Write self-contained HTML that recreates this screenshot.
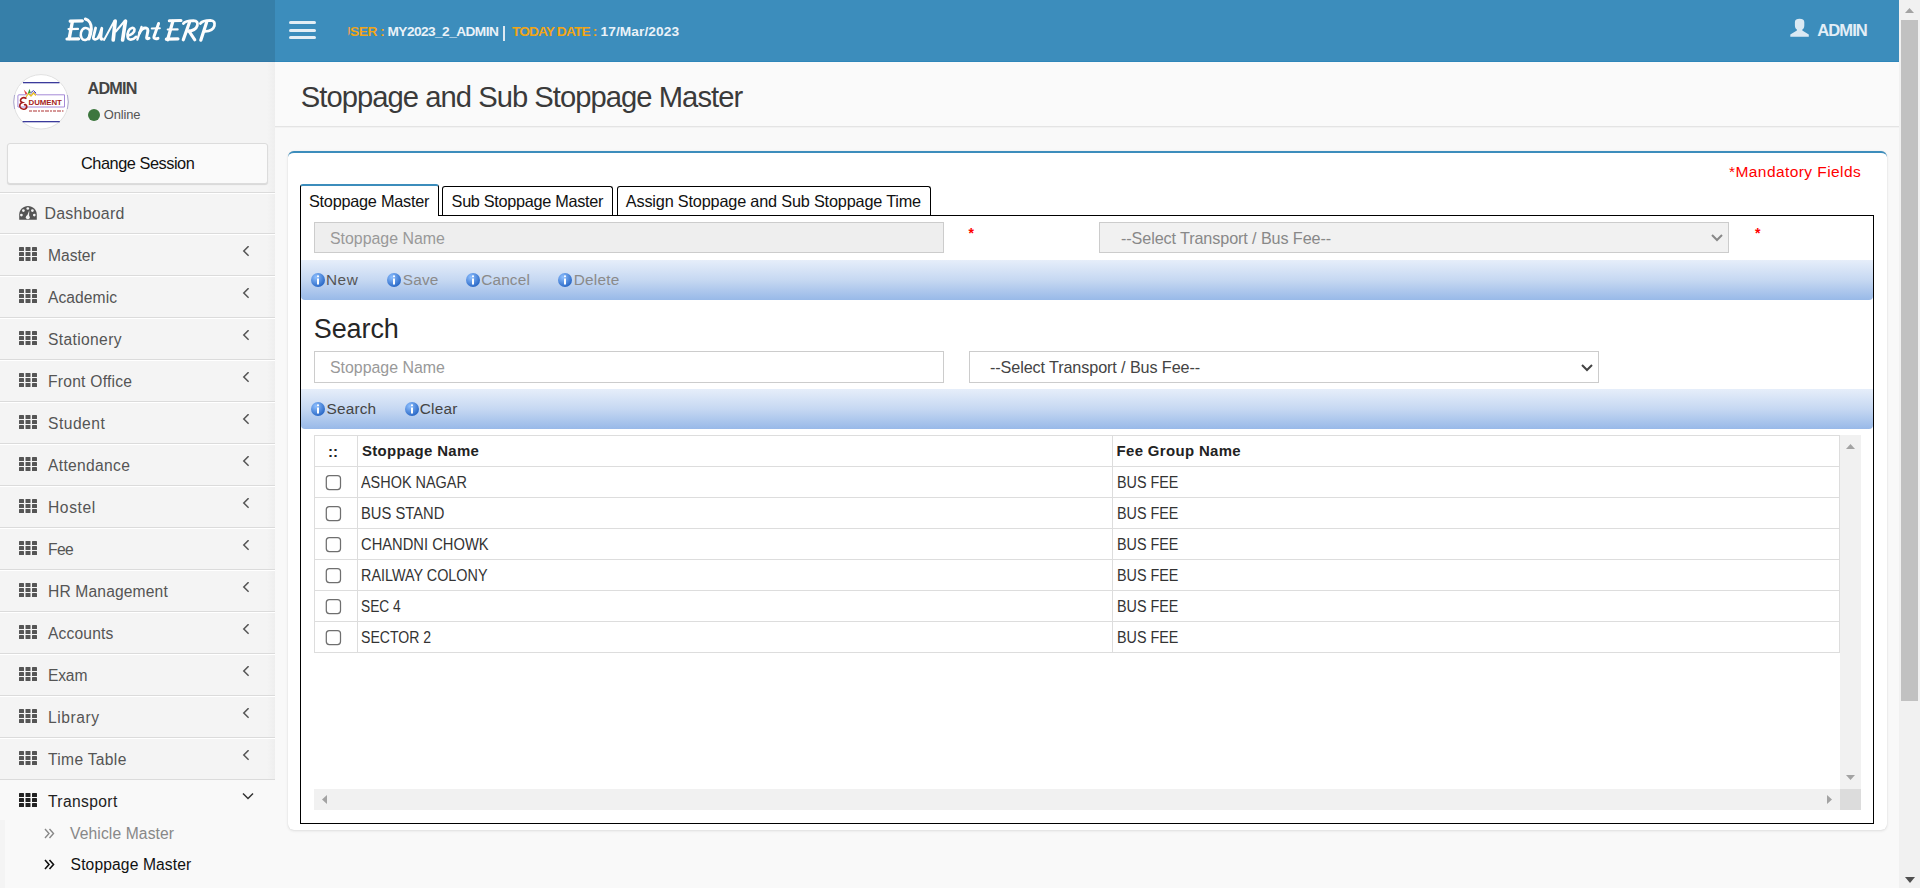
<!DOCTYPE html>
<html><head><meta charset="utf-8"><style>
html,body{margin:0;padding:0;width:1920px;height:888px;overflow:hidden;font-family:"Liberation Sans", sans-serif;}
div{font-family:"Liberation Sans", sans-serif;}
</style></head><body>
<div style="position:absolute;left:0px;top:0px;width:1920px;height:888px;background:#f9f9f9"></div>
<div style="position:absolute;left:0px;top:0px;width:275px;height:62px;background:#367fa9"></div>
<div style="position:absolute;left:275px;top:0px;width:1624px;height:62px;background:#3c8dbc"></div>
<div style="position:absolute;left:0px;top:61px;width:275px;height:1px;background:#2f78a8"></div>
<div style="position:absolute;left:275px;top:61px;width:1624px;height:1px;background:#2e86ba"></div>
<svg style="position:absolute;left:0;top:0" width="275" height="62" viewBox="0 0 275 62"><g stroke="#fdfdfd" fill="none" stroke-linecap="round" stroke-linejoin="round">
<path d="M70.2 21.2 L82.3 20.9" stroke-width="3.22"/><path d="M72.3 22 L69.2 38.6" stroke-width="3.36"/><path d="M68.6 29.1 L78 28.9" stroke-width="2.24"/><path d="M67 39.0 L78.6 38.8" stroke-width="3.22"/>
<path d="M89.5 30 C87.5 27 82.5 26.8 81 32.5 C79.8 37.5 82.5 40.5 85.5 40 C88.5 39.5 90.5 35 89.8 30" stroke-width="2.52"/><path d="M85.4 19 C89 20 91.5 24 91.3 29 C91 33 90 36.5 89 39" stroke-width="3.08"/>
<path d="M95.6 28 L93.4 37 C93 39.5 95.5 40 97.5 38.5 C99.5 36.5 101 31 101.8 28.3 L100.8 37.5 C100.6 39.2 101.2 39.6 102.5 39" stroke-width="2.80"/>
<path d="M104 40 L114.3 21" stroke-width="1.96"/><path d="M115.2 21 L113.2 40" stroke-width="3.64"/><path d="M115.8 31.5 L124.6 21" stroke-width="1.96"/><path d="M125.5 21 L122.6 40" stroke-width="3.64"/>
<path d="M127.8 35.8 C131 35 135 32.5 134.5 29.5 C134 27 130 27.5 128.5 31 C127 34.5 127 39 130 39.5 C132 39.8 134.5 38.5 136 36.8" stroke-width="2.66"/>
<path d="M137.4 39.5 L141.5 27" stroke-width="2.38"/><path d="M139.5 33 C141.5 29 144 27.5 146.5 28.2 C148.5 28.8 148 31 147.3 34 L146.6 37.5 C146.5 38.8 147.5 39 149 38.2" stroke-width="2.94"/>
<path d="M158.6 23.5 L154 36.5 C153.5 38.5 155.5 39.3 158 38.3" stroke-width="2.94"/><path d="M151.8 28.5 L159.8 28.3" stroke-width="2.10"/>
<path d="M169.3 20.7 L181 20.5" stroke-width="3.08"/><path d="M172.8 21.5 L167.6 39.8" stroke-width="3.22"/><path d="M167.8 29.5 L177.6 29.4" stroke-width="2.24"/><path d="M166.3 39.1 L178 38.9" stroke-width="3.08"/>
<path d="M189.6 22 L183.3 39.8" stroke-width="3.22"/><path d="M183.4 23.5 C185 21 189 20.6 193.5 20.6 C197 20.7 198 23 197.3 25.5 C196.3 29 192 31 187.5 31.2" stroke-width="2.80"/><path d="M189 31.2 L194.8 39.8" stroke-width="3.08"/>
<path d="M206.7 22 L200.8 40.2" stroke-width="3.22"/><path d="M200.4 23.5 C202 21 206 20.4 210.5 20.4 C214 20.5 215.2 23 214.4 25.8 C213.3 29.5 209 31.2 205 31.3" stroke-width="2.80"/>
</g></svg>
<div style="position:absolute;left:289px;top:21px;width:27px;height:3px;background:#e4eef5;border-radius:2px"></div>
<div style="position:absolute;left:289px;top:28.5px;width:27px;height:3px;background:#e4eef5;border-radius:2px"></div>
<div style="position:absolute;left:289px;top:36px;width:27px;height:3px;background:#e4eef5;border-radius:2px"></div>
<div style="position:absolute;left:348px;top:20px;width:400px;height:24px;overflow:hidden">
</div>
<div style="position:absolute;left:340.50px;top:25.30px;font-size:13.70px;line-height:13.70px;color:#f2a516;font-weight:bold;letter-spacing:-0.4px;white-space:nowrap;clip-path:inset(0 0 0 8px);">USER :</div>
<div style="position:absolute;left:387.50px;top:25.30px;font-size:13.70px;line-height:13.70px;color:#eaf2f8;font-weight:bold;letter-spacing:-0.57px;white-space:nowrap;">MY2023_2_ADMIN</div>
<div style="position:absolute;left:503px;top:25.6px;width:1.6px;height:15px;background:#dde9f2"></div>
<div style="position:absolute;left:512.00px;top:25.30px;font-size:13.70px;line-height:13.70px;color:#f2a516;font-weight:bold;letter-spacing:-0.85px;white-space:nowrap;">TODAY DATE :</div>
<div style="position:absolute;left:600.50px;top:25.30px;font-size:13.70px;line-height:13.70px;color:#eaf2f8;font-weight:bold;letter-spacing:0.1px;white-space:nowrap;">17/Mar/2023</div>
<svg style="position:absolute;left:1790px;top:18px" width="20" height="20" viewBox="0 0 20 20"><path d="M4.9 3.9 C4.9 1.6 6.8 0.8 9.6 0.8 C12.4 0.8 14.3 1.6 14.3 3.9 L14.3 7.4 C14.3 9.6 13.3 10.9 12.3 11.6 L12.3 12.4 L18.8 16.6 L18.8 18.8 L0.3 18.8 L0.3 16.6 L6.9 12.4 L6.9 11.6 C5.9 10.9 4.9 9.6 4.9 7.4 Z" fill="#dbe9f3"/></svg>
<div style="position:absolute;left:1817.20px;top:22.85px;font-size:16.60px;line-height:16.60px;color:#e3eef6;font-weight:bold;letter-spacing:-0.95px;white-space:nowrap;">ADMIN</div>
<div style="position:absolute;left:0px;top:62px;width:275px;height:826px;background:#f4f4f4"></div>
<div style="position:absolute;left:267px;top:62px;width:8px;height:826px;background:linear-gradient(to right,#f4f4f4,#eeeeee)"></div>
<svg style="position:absolute;left:14px;top:74px;overflow:visible" width="55" height="56" viewBox="0 0 55 56">
<circle cx="27" cy="27.8" r="27.2" fill="#fff" stroke="#dadada" stroke-width="0.8"/>
<path d="M0.6 21 A27 27 0 0 0 0.6 35" stroke="#5a4fb0" stroke-width="0.8" fill="none" opacity="0.5"/>
<path d="M53.4 21 A27 27 0 0 1 53.4 35" stroke="#5a4fb0" stroke-width="0.8" fill="none" opacity="0.5"/>
<rect x="9" y="8" width="36.5" height="1.3" fill="#3b3b9b"/>
<rect x="8.6" y="47" width="37.2" height="1.3" fill="#3b3b9b"/>
<path d="M13 20.8 L4.9 20.8 Q3.9 20.8 3.9 22 L3.9 33 L50.5 33 L50.5 20.8 L23 20.8 L20 18 L16 21" stroke="#a58ad8" stroke-width="1" fill="none"/>
<path d="M12 23 L14.5 19.5 L17 22 L19.5 19 L22 21.5" stroke="#e8c020" stroke-width="1.2" fill="none"/>
<path d="M11.5 20.5 L9.8 15.5 L13.5 19.5 Z" fill="#e04040"/><path d="M13.8 19.5 L15.5 14.8 L16.8 19 Z" fill="#3a9a3a"/><path d="M16.5 19 L19.5 16.5 L22 19" stroke="#4a4ab0" stroke-width="1" fill="none"/>
<text x="14.6" y="31.2" font-family="Liberation Sans" font-weight="bold" font-size="7.9" fill="#a51c1c" letter-spacing="-0.1">DUMENT</text>
<path d="M12.5 24.5 Q9 22.5 7 25 Q5.5 27.5 8.5 28.5 Q5 29.5 6 33 Q7.5 36 11 35 Q13.5 34 12.5 31.5 Q11.5 30 10 31" stroke="#a51c1c" stroke-width="1.6" fill="none"/>
<path d="M15 37 L49.5 37" stroke="#b84a4a" stroke-width="1.3" stroke-dasharray="3 1 4 1 2 1" opacity="0.75"/>
</svg>
<div style="position:absolute;left:87.50px;top:80.29px;font-size:16.20px;line-height:16.20px;color:#444;font-weight:bold;letter-spacing:-0.79px;white-space:nowrap;">ADMIN</div>
<div style="position:absolute;left:87.5px;top:109px;width:12px;height:12px;border-radius:50%;background:#3c763d"></div>
<div style="position:absolute;left:103.75px;top:109.06px;font-size:12.92px;line-height:12.92px;color:#555;font-weight:normal;letter-spacing:-0.106px;white-space:nowrap;">Online</div>
<div style="position:absolute;left:7px;top:143px;width:259px;height:39px;background:#fafafa;border:1px solid #dcdcdc;border-radius:3px;box-shadow:0 1px 1px rgba(0,0,0,0.12)"></div>
<div style="position:absolute;left:81.00px;top:154.97px;font-size:16.34px;line-height:16.34px;color:#111;font-weight:normal;letter-spacing:-0.465px;white-space:nowrap;">Change Session</div>
<div style="position:absolute;left:0px;top:192px;width:275px;height:1px;background:#dbdbdb"></div>
<div style="position:absolute;left:0px;top:193px;width:275px;height:1px;background:#ffffff"></div>
<svg style="position:absolute;left:19px;top:206px" width="18" height="14" viewBox="0 0 18 14">
<path d="M0.2 13.7 L0.2 8.5 C0.2 3.8 4.2 0 9 0 C13.8 0 17.8 3.8 17.8 8.5 L17.8 13.7 Z" fill="#555"/>
<circle cx="8.8" cy="2.5" r="1.35" fill="#f4f4f4"/><circle cx="4.4" cy="4.6" r="1.35" fill="#f4f4f4"/><circle cx="13.4" cy="4.6" r="1.35" fill="#f4f4f4"/><circle cx="2.4" cy="9.1" r="1.35" fill="#f4f4f4"/><circle cx="15.3" cy="9.1" r="1.35" fill="#f4f4f4"/>
<path d="M10.3 4.3 L7.6 11 L10 11.4 Z" fill="#f4f4f4"/><circle cx="8.8" cy="11.2" r="2" fill="#f4f4f4"/>
</svg>
<div style="position:absolute;left:44.50px;top:205.62px;font-size:15.92px;line-height:15.92px;color:#555;font-weight:normal;letter-spacing:0.254px;white-space:nowrap;">Dashboard</div>
<div style="position:absolute;left:0px;top:233px;width:275px;height:1px;background:#dbdbdb"></div>
<div style="position:absolute;left:0px;top:234px;width:275px;height:1px;background:#ffffff"></div>
<svg style="position:absolute;left:19px;top:247px" width="18" height="14" viewBox="0 0 18 14"><rect x="0" y="0" width="5" height="4" rx="0.6" fill="#555"/><rect x="6.5" y="0" width="5" height="4" rx="0.6" fill="#555"/><rect x="13" y="0" width="5" height="4" rx="0.6" fill="#555"/><rect x="0" y="5" width="5" height="4" rx="0.6" fill="#555"/><rect x="6.5" y="5" width="5" height="4" rx="0.6" fill="#555"/><rect x="13" y="5" width="5" height="4" rx="0.6" fill="#555"/><rect x="0" y="10" width="5" height="4" rx="0.6" fill="#555"/><rect x="6.5" y="10" width="5" height="4" rx="0.6" fill="#555"/><rect x="13" y="10" width="5" height="4" rx="0.6" fill="#555"/></svg>
<div style="position:absolute;left:48.00px;top:247.56px;font-size:15.64px;line-height:15.64px;color:#555;font-weight:normal;letter-spacing:0.0px;white-space:nowrap;">Master</div>
<svg style="position:absolute;left:242px;top:246px" width="8" height="11" viewBox="0 0 8 11"><path d="M6.6 0.2 L1.8 5 L6.6 9.8" stroke="#555" stroke-width="1.5" fill="none"/></svg>
<div style="position:absolute;left:0px;top:275px;width:275px;height:1px;background:#dbdbdb"></div>
<div style="position:absolute;left:0px;top:276px;width:275px;height:1px;background:#ffffff"></div>
<svg style="position:absolute;left:19px;top:289px" width="18" height="14" viewBox="0 0 18 14"><rect x="0" y="0" width="5" height="4" rx="0.6" fill="#555"/><rect x="6.5" y="0" width="5" height="4" rx="0.6" fill="#555"/><rect x="13" y="0" width="5" height="4" rx="0.6" fill="#555"/><rect x="0" y="5" width="5" height="4" rx="0.6" fill="#555"/><rect x="6.5" y="5" width="5" height="4" rx="0.6" fill="#555"/><rect x="13" y="5" width="5" height="4" rx="0.6" fill="#555"/><rect x="0" y="10" width="5" height="4" rx="0.6" fill="#555"/><rect x="6.5" y="10" width="5" height="4" rx="0.6" fill="#555"/><rect x="13" y="10" width="5" height="4" rx="0.6" fill="#555"/></svg>
<div style="position:absolute;left:48.00px;top:289.56px;font-size:15.64px;line-height:15.64px;color:#555;font-weight:normal;letter-spacing:0.063px;white-space:nowrap;">Academic</div>
<svg style="position:absolute;left:242px;top:288px" width="8" height="11" viewBox="0 0 8 11"><path d="M6.6 0.2 L1.8 5 L6.6 9.8" stroke="#555" stroke-width="1.5" fill="none"/></svg>
<div style="position:absolute;left:0px;top:317px;width:275px;height:1px;background:#dbdbdb"></div>
<div style="position:absolute;left:0px;top:318px;width:275px;height:1px;background:#ffffff"></div>
<svg style="position:absolute;left:19px;top:331px" width="18" height="14" viewBox="0 0 18 14"><rect x="0" y="0" width="5" height="4" rx="0.6" fill="#555"/><rect x="6.5" y="0" width="5" height="4" rx="0.6" fill="#555"/><rect x="13" y="0" width="5" height="4" rx="0.6" fill="#555"/><rect x="0" y="5" width="5" height="4" rx="0.6" fill="#555"/><rect x="6.5" y="5" width="5" height="4" rx="0.6" fill="#555"/><rect x="13" y="5" width="5" height="4" rx="0.6" fill="#555"/><rect x="0" y="10" width="5" height="4" rx="0.6" fill="#555"/><rect x="6.5" y="10" width="5" height="4" rx="0.6" fill="#555"/><rect x="13" y="10" width="5" height="4" rx="0.6" fill="#555"/></svg>
<div style="position:absolute;left:48.00px;top:331.56px;font-size:15.64px;line-height:15.64px;color:#555;font-weight:normal;letter-spacing:0.353px;white-space:nowrap;">Stationery</div>
<svg style="position:absolute;left:242px;top:330px" width="8" height="11" viewBox="0 0 8 11"><path d="M6.6 0.2 L1.8 5 L6.6 9.8" stroke="#555" stroke-width="1.5" fill="none"/></svg>
<div style="position:absolute;left:0px;top:359px;width:275px;height:1px;background:#dbdbdb"></div>
<div style="position:absolute;left:0px;top:360px;width:275px;height:1px;background:#ffffff"></div>
<svg style="position:absolute;left:19px;top:373px" width="18" height="14" viewBox="0 0 18 14"><rect x="0" y="0" width="5" height="4" rx="0.6" fill="#555"/><rect x="6.5" y="0" width="5" height="4" rx="0.6" fill="#555"/><rect x="13" y="0" width="5" height="4" rx="0.6" fill="#555"/><rect x="0" y="5" width="5" height="4" rx="0.6" fill="#555"/><rect x="6.5" y="5" width="5" height="4" rx="0.6" fill="#555"/><rect x="13" y="5" width="5" height="4" rx="0.6" fill="#555"/><rect x="0" y="10" width="5" height="4" rx="0.6" fill="#555"/><rect x="6.5" y="10" width="5" height="4" rx="0.6" fill="#555"/><rect x="13" y="10" width="5" height="4" rx="0.6" fill="#555"/></svg>
<div style="position:absolute;left:48.00px;top:373.56px;font-size:15.64px;line-height:15.64px;color:#555;font-weight:normal;letter-spacing:0.238px;white-space:nowrap;">Front Office</div>
<svg style="position:absolute;left:242px;top:372px" width="8" height="11" viewBox="0 0 8 11"><path d="M6.6 0.2 L1.8 5 L6.6 9.8" stroke="#555" stroke-width="1.5" fill="none"/></svg>
<div style="position:absolute;left:0px;top:401px;width:275px;height:1px;background:#dbdbdb"></div>
<div style="position:absolute;left:0px;top:402px;width:275px;height:1px;background:#ffffff"></div>
<svg style="position:absolute;left:19px;top:415px" width="18" height="14" viewBox="0 0 18 14"><rect x="0" y="0" width="5" height="4" rx="0.6" fill="#555"/><rect x="6.5" y="0" width="5" height="4" rx="0.6" fill="#555"/><rect x="13" y="0" width="5" height="4" rx="0.6" fill="#555"/><rect x="0" y="5" width="5" height="4" rx="0.6" fill="#555"/><rect x="6.5" y="5" width="5" height="4" rx="0.6" fill="#555"/><rect x="13" y="5" width="5" height="4" rx="0.6" fill="#555"/><rect x="0" y="10" width="5" height="4" rx="0.6" fill="#555"/><rect x="6.5" y="10" width="5" height="4" rx="0.6" fill="#555"/><rect x="13" y="10" width="5" height="4" rx="0.6" fill="#555"/></svg>
<div style="position:absolute;left:48.00px;top:415.56px;font-size:15.64px;line-height:15.64px;color:#555;font-weight:normal;letter-spacing:0.487px;white-space:nowrap;">Student</div>
<svg style="position:absolute;left:242px;top:414px" width="8" height="11" viewBox="0 0 8 11"><path d="M6.6 0.2 L1.8 5 L6.6 9.8" stroke="#555" stroke-width="1.5" fill="none"/></svg>
<div style="position:absolute;left:0px;top:443px;width:275px;height:1px;background:#dbdbdb"></div>
<div style="position:absolute;left:0px;top:444px;width:275px;height:1px;background:#ffffff"></div>
<svg style="position:absolute;left:19px;top:457px" width="18" height="14" viewBox="0 0 18 14"><rect x="0" y="0" width="5" height="4" rx="0.6" fill="#555"/><rect x="6.5" y="0" width="5" height="4" rx="0.6" fill="#555"/><rect x="13" y="0" width="5" height="4" rx="0.6" fill="#555"/><rect x="0" y="5" width="5" height="4" rx="0.6" fill="#555"/><rect x="6.5" y="5" width="5" height="4" rx="0.6" fill="#555"/><rect x="13" y="5" width="5" height="4" rx="0.6" fill="#555"/><rect x="0" y="10" width="5" height="4" rx="0.6" fill="#555"/><rect x="6.5" y="10" width="5" height="4" rx="0.6" fill="#555"/><rect x="13" y="10" width="5" height="4" rx="0.6" fill="#555"/></svg>
<div style="position:absolute;left:48.00px;top:457.56px;font-size:15.64px;line-height:15.64px;color:#555;font-weight:normal;letter-spacing:0.309px;white-space:nowrap;">Attendance</div>
<svg style="position:absolute;left:242px;top:456px" width="8" height="11" viewBox="0 0 8 11"><path d="M6.6 0.2 L1.8 5 L6.6 9.8" stroke="#555" stroke-width="1.5" fill="none"/></svg>
<div style="position:absolute;left:0px;top:485px;width:275px;height:1px;background:#dbdbdb"></div>
<div style="position:absolute;left:0px;top:486px;width:275px;height:1px;background:#ffffff"></div>
<svg style="position:absolute;left:19px;top:499px" width="18" height="14" viewBox="0 0 18 14"><rect x="0" y="0" width="5" height="4" rx="0.6" fill="#555"/><rect x="6.5" y="0" width="5" height="4" rx="0.6" fill="#555"/><rect x="13" y="0" width="5" height="4" rx="0.6" fill="#555"/><rect x="0" y="5" width="5" height="4" rx="0.6" fill="#555"/><rect x="6.5" y="5" width="5" height="4" rx="0.6" fill="#555"/><rect x="13" y="5" width="5" height="4" rx="0.6" fill="#555"/><rect x="0" y="10" width="5" height="4" rx="0.6" fill="#555"/><rect x="6.5" y="10" width="5" height="4" rx="0.6" fill="#555"/><rect x="13" y="10" width="5" height="4" rx="0.6" fill="#555"/></svg>
<div style="position:absolute;left:48.00px;top:499.56px;font-size:15.64px;line-height:15.64px;color:#555;font-weight:normal;letter-spacing:0.58px;white-space:nowrap;">Hostel</div>
<svg style="position:absolute;left:242px;top:498px" width="8" height="11" viewBox="0 0 8 11"><path d="M6.6 0.2 L1.8 5 L6.6 9.8" stroke="#555" stroke-width="1.5" fill="none"/></svg>
<div style="position:absolute;left:0px;top:527px;width:275px;height:1px;background:#dbdbdb"></div>
<div style="position:absolute;left:0px;top:528px;width:275px;height:1px;background:#ffffff"></div>
<svg style="position:absolute;left:19px;top:541px" width="18" height="14" viewBox="0 0 18 14"><rect x="0" y="0" width="5" height="4" rx="0.6" fill="#555"/><rect x="6.5" y="0" width="5" height="4" rx="0.6" fill="#555"/><rect x="13" y="0" width="5" height="4" rx="0.6" fill="#555"/><rect x="0" y="5" width="5" height="4" rx="0.6" fill="#555"/><rect x="6.5" y="5" width="5" height="4" rx="0.6" fill="#555"/><rect x="13" y="5" width="5" height="4" rx="0.6" fill="#555"/><rect x="0" y="10" width="5" height="4" rx="0.6" fill="#555"/><rect x="6.5" y="10" width="5" height="4" rx="0.6" fill="#555"/><rect x="13" y="10" width="5" height="4" rx="0.6" fill="#555"/></svg>
<div style="position:absolute;left:48.00px;top:541.56px;font-size:15.64px;line-height:15.64px;color:#555;font-weight:normal;letter-spacing:-0.58px;white-space:nowrap;">Fee</div>
<svg style="position:absolute;left:242px;top:540px" width="8" height="11" viewBox="0 0 8 11"><path d="M6.6 0.2 L1.8 5 L6.6 9.8" stroke="#555" stroke-width="1.5" fill="none"/></svg>
<div style="position:absolute;left:0px;top:569px;width:275px;height:1px;background:#dbdbdb"></div>
<div style="position:absolute;left:0px;top:570px;width:275px;height:1px;background:#ffffff"></div>
<svg style="position:absolute;left:19px;top:583px" width="18" height="14" viewBox="0 0 18 14"><rect x="0" y="0" width="5" height="4" rx="0.6" fill="#555"/><rect x="6.5" y="0" width="5" height="4" rx="0.6" fill="#555"/><rect x="13" y="0" width="5" height="4" rx="0.6" fill="#555"/><rect x="0" y="5" width="5" height="4" rx="0.6" fill="#555"/><rect x="6.5" y="5" width="5" height="4" rx="0.6" fill="#555"/><rect x="13" y="5" width="5" height="4" rx="0.6" fill="#555"/><rect x="0" y="10" width="5" height="4" rx="0.6" fill="#555"/><rect x="6.5" y="10" width="5" height="4" rx="0.6" fill="#555"/><rect x="13" y="10" width="5" height="4" rx="0.6" fill="#555"/></svg>
<div style="position:absolute;left:48.00px;top:583.56px;font-size:15.64px;line-height:15.64px;color:#555;font-weight:normal;letter-spacing:0.137px;white-space:nowrap;">HR Management</div>
<svg style="position:absolute;left:242px;top:582px" width="8" height="11" viewBox="0 0 8 11"><path d="M6.6 0.2 L1.8 5 L6.6 9.8" stroke="#555" stroke-width="1.5" fill="none"/></svg>
<div style="position:absolute;left:0px;top:611px;width:275px;height:1px;background:#dbdbdb"></div>
<div style="position:absolute;left:0px;top:612px;width:275px;height:1px;background:#ffffff"></div>
<svg style="position:absolute;left:19px;top:625px" width="18" height="14" viewBox="0 0 18 14"><rect x="0" y="0" width="5" height="4" rx="0.6" fill="#555"/><rect x="6.5" y="0" width="5" height="4" rx="0.6" fill="#555"/><rect x="13" y="0" width="5" height="4" rx="0.6" fill="#555"/><rect x="0" y="5" width="5" height="4" rx="0.6" fill="#555"/><rect x="6.5" y="5" width="5" height="4" rx="0.6" fill="#555"/><rect x="13" y="5" width="5" height="4" rx="0.6" fill="#555"/><rect x="0" y="10" width="5" height="4" rx="0.6" fill="#555"/><rect x="6.5" y="10" width="5" height="4" rx="0.6" fill="#555"/><rect x="13" y="10" width="5" height="4" rx="0.6" fill="#555"/></svg>
<div style="position:absolute;left:48.00px;top:625.56px;font-size:15.64px;line-height:15.64px;color:#555;font-weight:normal;letter-spacing:0.149px;white-space:nowrap;">Accounts</div>
<svg style="position:absolute;left:242px;top:624px" width="8" height="11" viewBox="0 0 8 11"><path d="M6.6 0.2 L1.8 5 L6.6 9.8" stroke="#555" stroke-width="1.5" fill="none"/></svg>
<div style="position:absolute;left:0px;top:653px;width:275px;height:1px;background:#dbdbdb"></div>
<div style="position:absolute;left:0px;top:654px;width:275px;height:1px;background:#ffffff"></div>
<svg style="position:absolute;left:19px;top:667px" width="18" height="14" viewBox="0 0 18 14"><rect x="0" y="0" width="5" height="4" rx="0.6" fill="#555"/><rect x="6.5" y="0" width="5" height="4" rx="0.6" fill="#555"/><rect x="13" y="0" width="5" height="4" rx="0.6" fill="#555"/><rect x="0" y="5" width="5" height="4" rx="0.6" fill="#555"/><rect x="6.5" y="5" width="5" height="4" rx="0.6" fill="#555"/><rect x="13" y="5" width="5" height="4" rx="0.6" fill="#555"/><rect x="0" y="10" width="5" height="4" rx="0.6" fill="#555"/><rect x="6.5" y="10" width="5" height="4" rx="0.6" fill="#555"/><rect x="13" y="10" width="5" height="4" rx="0.6" fill="#555"/></svg>
<div style="position:absolute;left:48.00px;top:667.56px;font-size:15.64px;line-height:15.64px;color:#555;font-weight:normal;letter-spacing:-0.18px;white-space:nowrap;">Exam</div>
<svg style="position:absolute;left:242px;top:666px" width="8" height="11" viewBox="0 0 8 11"><path d="M6.6 0.2 L1.8 5 L6.6 9.8" stroke="#555" stroke-width="1.5" fill="none"/></svg>
<div style="position:absolute;left:0px;top:695px;width:275px;height:1px;background:#dbdbdb"></div>
<div style="position:absolute;left:0px;top:696px;width:275px;height:1px;background:#ffffff"></div>
<svg style="position:absolute;left:19px;top:709px" width="18" height="14" viewBox="0 0 18 14"><rect x="0" y="0" width="5" height="4" rx="0.6" fill="#555"/><rect x="6.5" y="0" width="5" height="4" rx="0.6" fill="#555"/><rect x="13" y="0" width="5" height="4" rx="0.6" fill="#555"/><rect x="0" y="5" width="5" height="4" rx="0.6" fill="#555"/><rect x="6.5" y="5" width="5" height="4" rx="0.6" fill="#555"/><rect x="13" y="5" width="5" height="4" rx="0.6" fill="#555"/><rect x="0" y="10" width="5" height="4" rx="0.6" fill="#555"/><rect x="6.5" y="10" width="5" height="4" rx="0.6" fill="#555"/><rect x="13" y="10" width="5" height="4" rx="0.6" fill="#555"/></svg>
<div style="position:absolute;left:48.00px;top:709.56px;font-size:15.64px;line-height:15.64px;color:#555;font-weight:normal;letter-spacing:0.553px;white-space:nowrap;">Library</div>
<svg style="position:absolute;left:242px;top:708px" width="8" height="11" viewBox="0 0 8 11"><path d="M6.6 0.2 L1.8 5 L6.6 9.8" stroke="#555" stroke-width="1.5" fill="none"/></svg>
<div style="position:absolute;left:0px;top:737px;width:275px;height:1px;background:#dbdbdb"></div>
<div style="position:absolute;left:0px;top:738px;width:275px;height:1px;background:#ffffff"></div>
<svg style="position:absolute;left:19px;top:751px" width="18" height="14" viewBox="0 0 18 14"><rect x="0" y="0" width="5" height="4" rx="0.6" fill="#555"/><rect x="6.5" y="0" width="5" height="4" rx="0.6" fill="#555"/><rect x="13" y="0" width="5" height="4" rx="0.6" fill="#555"/><rect x="0" y="5" width="5" height="4" rx="0.6" fill="#555"/><rect x="6.5" y="5" width="5" height="4" rx="0.6" fill="#555"/><rect x="13" y="5" width="5" height="4" rx="0.6" fill="#555"/><rect x="0" y="10" width="5" height="4" rx="0.6" fill="#555"/><rect x="6.5" y="10" width="5" height="4" rx="0.6" fill="#555"/><rect x="13" y="10" width="5" height="4" rx="0.6" fill="#555"/></svg>
<div style="position:absolute;left:48.00px;top:751.56px;font-size:15.64px;line-height:15.64px;color:#555;font-weight:normal;letter-spacing:0.309px;white-space:nowrap;">Time Table</div>
<svg style="position:absolute;left:242px;top:750px" width="8" height="11" viewBox="0 0 8 11"><path d="M6.6 0.2 L1.8 5 L6.6 9.8" stroke="#555" stroke-width="1.5" fill="none"/></svg>
<div style="position:absolute;left:0px;top:779px;width:275px;height:1px;background:#dbdbdb"></div>
<div style="position:absolute;left:0px;top:780px;width:275px;height:1px;background:#ffffff"></div>
<div style="position:absolute;left:0px;top:780px;width:275px;height:108px;background:#f9f9f9"></div>
<div style="position:absolute;left:0px;top:820px;width:5px;height:68px;background:#f4f4f4"></div>
<svg style="position:absolute;left:19px;top:793px" width="18" height="14" viewBox="0 0 18 14"><rect x="0" y="0" width="5" height="4" rx="0.6" fill="#222"/><rect x="6.5" y="0" width="5" height="4" rx="0.6" fill="#222"/><rect x="13" y="0" width="5" height="4" rx="0.6" fill="#222"/><rect x="0" y="5" width="5" height="4" rx="0.6" fill="#222"/><rect x="6.5" y="5" width="5" height="4" rx="0.6" fill="#222"/><rect x="13" y="5" width="5" height="4" rx="0.6" fill="#222"/><rect x="0" y="10" width="5" height="4" rx="0.6" fill="#222"/><rect x="6.5" y="10" width="5" height="4" rx="0.6" fill="#222"/><rect x="13" y="10" width="5" height="4" rx="0.6" fill="#222"/></svg>
<div style="position:absolute;left:48.00px;top:793.66px;font-size:15.64px;line-height:15.64px;color:#222;font-weight:normal;letter-spacing:0.37px;white-space:nowrap;">Transport</div>
<svg style="position:absolute;left:242px;top:792px" width="12" height="9" viewBox="0 0 12 9"><path d="M1 1.5 L6 6.5 L11 1.5" stroke="#333" stroke-width="1.5" fill="none"/></svg>
<svg style="position:absolute;left:44px;top:828px" width="11" height="11" viewBox="0 0 11 11"><path d="M1 1 L5 5.5 L1 10 M5.5 1 L9.5 5.5 L5.5 10" stroke="#888" stroke-width="1.4" fill="none"/></svg>
<div style="position:absolute;left:70.00px;top:825.56px;font-size:15.64px;line-height:15.64px;color:#888;font-weight:normal;letter-spacing:0.12px;white-space:nowrap;">Vehicle Master</div>
<svg style="position:absolute;left:44px;top:859px" width="11" height="11" viewBox="0 0 11 11"><path d="M1 1 L5 5.5 L1 10 M5.5 1 L9.5 5.5 L5.5 10" stroke="#111" stroke-width="1.6" fill="none"/></svg>
<div style="position:absolute;left:70.60px;top:856.56px;font-size:15.64px;line-height:15.64px;color:#111;font-weight:normal;letter-spacing:0.12px;white-space:nowrap;">Stoppage Master</div>
<div style="position:absolute;left:275px;top:62px;width:1624px;height:64px;background:#fafafa"></div>
<div style="position:absolute;left:275px;top:126px;width:1624px;height:1px;background:#e4e4e4"></div>
<div style="position:absolute;left:275px;top:127px;width:1624px;height:1px;background:#f2f2f2"></div>
<div style="position:absolute;left:300.80px;top:82.89px;font-size:29.19px;line-height:29.19px;color:#3a3a3a;font-weight:normal;letter-spacing:-0.963px;white-space:nowrap;">Stoppage and Sub Stoppage Master</div>
<div style="position:absolute;left:288px;top:151px;width:1599px;height:679px;background:#fff;border-top:2px solid #3c8dbc;border-radius:6px;box-sizing:border-box;box-shadow:0 0 1px rgba(0,0,0,0.13),0 1px 3px rgba(0,0,0,0.1)"></div>
<div style="position:absolute;left:1729.00px;top:163.88px;font-size:15.50px;line-height:15.50px;color:#ff0000;font-weight:normal;letter-spacing:0.427px;white-space:nowrap;">*Mandatory Fields</div>
<div style="position:absolute;left:300px;top:215px;width:1572px;height:607px;border:1px solid #000"></div>
<div style="position:absolute;left:300px;top:184px;width:139px;height:32px;background:#fff;border-left:1px solid #000;border-right:1px solid #000;border-top:2px solid #3c8dbc;border-radius:3px 3px 0 0;box-sizing:border-box"></div>
<div style="position:absolute;left:309.00px;top:193.13px;font-size:16.27px;line-height:16.27px;color:#111;font-weight:normal;letter-spacing:-0.247px;white-space:nowrap;">Stoppage Master</div>
<div style="position:absolute;left:442px;top:186px;width:171px;height:29px;border:1px solid #000;border-bottom:none;border-radius:3px 3px 0 0;box-sizing:border-box;background:#fff"></div>
<div style="position:absolute;left:451.60px;top:193.13px;font-size:16.27px;line-height:16.27px;color:#111;font-weight:normal;letter-spacing:-0.307px;white-space:nowrap;">Sub Stoppage Master</div>
<div style="position:absolute;left:617px;top:186px;width:314px;height:29px;border:1px solid #000;border-bottom:none;border-radius:3px 3px 0 0;box-sizing:border-box;background:#fff"></div>
<div style="position:absolute;left:625.80px;top:193.13px;font-size:16.27px;line-height:16.27px;color:#111;font-weight:normal;letter-spacing:-0.186px;white-space:nowrap;">Assign Stoppage and Sub Stoppage Time</div>
<div style="position:absolute;left:314px;top:222px;width:630px;height:31px;background:#eeeeee;border:1px solid #cccccc;box-sizing:border-box"></div>
<div style="position:absolute;left:330.00px;top:231.02px;font-size:15.92px;line-height:15.92px;color:#999;font-weight:normal;letter-spacing:-0.009px;white-space:nowrap;">Stoppage Name</div>
<div style="position:absolute;left:968.50px;top:225.65px;font-size:14.00px;line-height:14.00px;color:#ff0000;font-weight:bold;letter-spacing:0px;white-space:nowrap;">*</div>
<div style="position:absolute;left:1099px;top:222px;width:630px;height:31px;background:#f1f1f1;border:1px solid #cccccc;box-sizing:border-box"></div>
<div style="position:absolute;left:1121.00px;top:229.99px;font-size:16.20px;line-height:16.20px;color:#888;font-weight:normal;letter-spacing:-0.107px;white-space:nowrap;">--Select Transport / Bus Fee--</div>
<svg style="position:absolute;left:1711px;top:234px" width="12" height="8" viewBox="0 0 12 8"><path d="M1 1 L6 6 L11 1" stroke="#888" stroke-width="2" fill="none"/></svg>
<div style="position:absolute;left:1755.00px;top:225.65px;font-size:14.00px;line-height:14.00px;color:#ff0000;font-weight:bold;letter-spacing:0px;white-space:nowrap;">*</div>
<div style="position:absolute;left:301px;top:260px;width:1572px;height:40px;background:linear-gradient(to bottom,#e6eefa 0%,#c6d8f2 50%,#98b9e8 100%);border-radius:0 0 4px 4px"></div>
<svg style="position:absolute;left:311px;top:273px" width="14" height="14" viewBox="0 0 14 14"><defs><radialGradient id="g311273" cx="0.35" cy="0.3" r="0.8"><stop offset="0" stop-color="#8fc0ff"/><stop offset="1" stop-color="#1f5fc0"/></radialGradient></defs><circle cx="7" cy="7" r="7" fill="url(#g311273)"/><rect x="6" y="5.5" width="2" height="6" fill="#fff"/><circle cx="7" cy="3.3" r="1.1" fill="#fff"/></svg>
<div style="position:absolute;left:326.00px;top:272.30px;font-size:15.36px;line-height:15.36px;color:#555;font-weight:normal;letter-spacing:0.5px;white-space:nowrap;">New</div>
<svg style="position:absolute;left:387px;top:273px" width="14" height="14" viewBox="0 0 14 14"><defs><radialGradient id="g387273" cx="0.35" cy="0.3" r="0.8"><stop offset="0" stop-color="#8fc0ff"/><stop offset="1" stop-color="#1f5fc0"/></radialGradient></defs><circle cx="7" cy="7" r="7" fill="url(#g387273)"/><rect x="6" y="5.5" width="2" height="6" fill="#fff"/><circle cx="7" cy="3.3" r="1.1" fill="#fff"/></svg>
<div style="position:absolute;left:402.80px;top:272.00px;font-size:15.36px;line-height:15.36px;color:#8a8a8a;font-weight:normal;letter-spacing:0.2px;white-space:nowrap;">Save</div>
<svg style="position:absolute;left:466px;top:273px" width="14" height="14" viewBox="0 0 14 14"><defs><radialGradient id="g466273" cx="0.35" cy="0.3" r="0.8"><stop offset="0" stop-color="#8fc0ff"/><stop offset="1" stop-color="#1f5fc0"/></radialGradient></defs><circle cx="7" cy="7" r="7" fill="url(#g466273)"/><rect x="6" y="5.5" width="2" height="6" fill="#fff"/><circle cx="7" cy="3.3" r="1.1" fill="#fff"/></svg>
<div style="position:absolute;left:481.20px;top:272.00px;font-size:15.36px;line-height:15.36px;color:#8a8a8a;font-weight:normal;letter-spacing:0.16px;white-space:nowrap;">Cancel</div>
<svg style="position:absolute;left:558px;top:273px" width="14" height="14" viewBox="0 0 14 14"><defs><radialGradient id="g558273" cx="0.35" cy="0.3" r="0.8"><stop offset="0" stop-color="#8fc0ff"/><stop offset="1" stop-color="#1f5fc0"/></radialGradient></defs><circle cx="7" cy="7" r="7" fill="url(#g558273)"/><rect x="6" y="5.5" width="2" height="6" fill="#fff"/><circle cx="7" cy="3.3" r="1.1" fill="#fff"/></svg>
<div style="position:absolute;left:573.80px;top:272.00px;font-size:15.36px;line-height:15.36px;color:#8a8a8a;font-weight:normal;letter-spacing:0.2px;white-space:nowrap;">Delete</div>
<div style="position:absolute;left:313.80px;top:316.04px;font-size:27.00px;line-height:27.00px;color:#262626;font-weight:normal;letter-spacing:-0.1px;white-space:nowrap;">Search</div>
<div style="position:absolute;left:314px;top:351px;width:630px;height:32px;background:#fff;border:1px solid #cccccc;box-sizing:border-box"></div>
<div style="position:absolute;left:330.00px;top:360.22px;font-size:15.92px;line-height:15.92px;color:#999;font-weight:normal;letter-spacing:-0.009px;white-space:nowrap;">Stoppage Name</div>
<div style="position:absolute;left:969px;top:351px;width:630px;height:32px;background:#fff;border:1px solid #cccccc;box-sizing:border-box"></div>
<div style="position:absolute;left:990.00px;top:359.29px;font-size:16.20px;line-height:16.20px;color:#444;font-weight:normal;letter-spacing:-0.107px;white-space:nowrap;">--Select Transport / Bus Fee--</div>
<svg style="position:absolute;left:1581px;top:364px" width="12" height="8" viewBox="0 0 12 8"><path d="M1 1 L6 6 L11 1" stroke="#444" stroke-width="2" fill="none"/></svg>
<div style="position:absolute;left:301px;top:389px;width:1572px;height:40px;background:linear-gradient(to bottom,#e6eefa 0%,#c6d8f2 50%,#98b9e8 100%);border-radius:0 0 4px 4px"></div>
<svg style="position:absolute;left:311px;top:402px" width="14" height="14" viewBox="0 0 14 14"><defs><radialGradient id="g311402" cx="0.35" cy="0.3" r="0.8"><stop offset="0" stop-color="#8fc0ff"/><stop offset="1" stop-color="#1f5fc0"/></radialGradient></defs><circle cx="7" cy="7" r="7" fill="url(#g311402)"/><rect x="6" y="5.5" width="2" height="6" fill="#fff"/><circle cx="7" cy="3.3" r="1.1" fill="#fff"/></svg>
<div style="position:absolute;left:326.50px;top:400.75px;font-size:15.36px;line-height:15.36px;color:#444;font-weight:normal;letter-spacing:0.2px;white-space:nowrap;">Search</div>
<svg style="position:absolute;left:405px;top:402px" width="14" height="14" viewBox="0 0 14 14"><defs><radialGradient id="g405402" cx="0.35" cy="0.3" r="0.8"><stop offset="0" stop-color="#8fc0ff"/><stop offset="1" stop-color="#1f5fc0"/></radialGradient></defs><circle cx="7" cy="7" r="7" fill="url(#g405402)"/><rect x="6" y="5.5" width="2" height="6" fill="#fff"/><circle cx="7" cy="3.3" r="1.1" fill="#fff"/></svg>
<div style="position:absolute;left:419.75px;top:400.75px;font-size:15.36px;line-height:15.36px;color:#444;font-weight:normal;letter-spacing:0.2px;white-space:nowrap;">Clear</div>
<div style="position:absolute;left:314px;top:435px;width:1547px;height:375px;background:#fff"></div>
<div style="position:absolute;left:1840px;top:435px;width:21px;height:354px;background:#f1f1f1"></div>
<svg style="position:absolute;left:1846px;top:444px" width="9" height="5"><path d="M0 5 L4.5 0 L9 5 Z" fill="#a3a3a3"/></svg>
<svg style="position:absolute;left:1846px;top:775px" width="9" height="5"><path d="M0 0 L4.5 5 L9 0 Z" fill="#a3a3a3"/></svg>
<div style="position:absolute;left:314px;top:789px;width:1526px;height:21px;background:#f1f1f1"></div>
<div style="position:absolute;left:1840px;top:789px;width:21px;height:21px;background:#dcdcdc"></div>
<svg style="position:absolute;left:322px;top:795px" width="5" height="9"><path d="M5 0 L0 4.5 L5 9 Z" fill="#a3a3a3"/></svg>
<svg style="position:absolute;left:1827px;top:795px" width="5" height="9"><path d="M0 0 L5 4.5 L0 9 Z" fill="#a3a3a3"/></svg>
<div style="position:absolute;left:314px;top:435px;width:1526px;height:218px;border:1px solid #dddddd;box-sizing:border-box"></div>
<div style="position:absolute;left:314px;top:466px;width:1526px;height:1px;background:#dddddd"></div>
<div style="position:absolute;left:314px;top:497px;width:1526px;height:1px;background:#dddddd"></div>
<div style="position:absolute;left:314px;top:528px;width:1526px;height:1px;background:#dddddd"></div>
<div style="position:absolute;left:314px;top:559px;width:1526px;height:1px;background:#dddddd"></div>
<div style="position:absolute;left:314px;top:590px;width:1526px;height:1px;background:#dddddd"></div>
<div style="position:absolute;left:314px;top:621px;width:1526px;height:1px;background:#dddddd"></div>
<div style="position:absolute;left:357px;top:435px;width:1px;height:218px;background:#dddddd"></div>
<div style="position:absolute;left:1112px;top:435px;width:1px;height:218px;background:#dddddd"></div>
<div style="position:absolute;left:328.00px;top:444.30px;font-size:15.00px;line-height:15.00px;color:#222;font-weight:bold;letter-spacing:0px;white-space:nowrap;">::</div>
<div style="position:absolute;left:361.90px;top:444.05px;font-size:14.94px;line-height:14.94px;color:#222;font-weight:bold;letter-spacing:0.344px;white-space:nowrap;">Stoppage Name</div>
<div style="position:absolute;left:1116.60px;top:444.05px;font-size:14.94px;line-height:14.94px;color:#222;font-weight:bold;letter-spacing:0.344px;white-space:nowrap;">Fee Group Name</div>
<svg style="position:absolute;left:325px;top:474px" width="17" height="17"><rect x="1.3" y="1.6" width="14.2" height="13.9" rx="3" fill="#fff" stroke="#6f6f6f" stroke-width="1.25"/></svg>
<div style="position:absolute;left:361.30px;top:475.14px;font-size:15.78px;line-height:15.78px;color:#333;font-weight:normal;letter-spacing:0px;white-space:nowrap;transform:scaleX(0.915);transform-origin:0 0;">ASHOK NAGAR</div>
<div style="position:absolute;left:1116.60px;top:475.14px;font-size:15.78px;line-height:15.78px;color:#333;font-weight:normal;letter-spacing:0px;white-space:nowrap;transform:scaleX(0.910);transform-origin:0 0;">BUS FEE</div>
<svg style="position:absolute;left:325px;top:505px" width="17" height="17"><rect x="1.3" y="1.6" width="14.2" height="13.9" rx="3" fill="#fff" stroke="#6f6f6f" stroke-width="1.25"/></svg>
<div style="position:absolute;left:361.30px;top:506.14px;font-size:15.78px;line-height:15.78px;color:#333;font-weight:normal;letter-spacing:0px;white-space:nowrap;transform:scaleX(0.936);transform-origin:0 0;">BUS STAND</div>
<div style="position:absolute;left:1116.60px;top:506.14px;font-size:15.78px;line-height:15.78px;color:#333;font-weight:normal;letter-spacing:0px;white-space:nowrap;transform:scaleX(0.910);transform-origin:0 0;">BUS FEE</div>
<svg style="position:absolute;left:325px;top:536px" width="17" height="17"><rect x="1.3" y="1.6" width="14.2" height="13.9" rx="3" fill="#fff" stroke="#6f6f6f" stroke-width="1.25"/></svg>
<div style="position:absolute;left:361.30px;top:537.14px;font-size:15.78px;line-height:15.78px;color:#333;font-weight:normal;letter-spacing:0px;white-space:nowrap;transform:scaleX(0.934);transform-origin:0 0;">CHANDNI CHOWK</div>
<div style="position:absolute;left:1116.60px;top:537.14px;font-size:15.78px;line-height:15.78px;color:#333;font-weight:normal;letter-spacing:0px;white-space:nowrap;transform:scaleX(0.910);transform-origin:0 0;">BUS FEE</div>
<svg style="position:absolute;left:325px;top:567px" width="17" height="17"><rect x="1.3" y="1.6" width="14.2" height="13.9" rx="3" fill="#fff" stroke="#6f6f6f" stroke-width="1.25"/></svg>
<div style="position:absolute;left:361.30px;top:568.14px;font-size:15.78px;line-height:15.78px;color:#333;font-weight:normal;letter-spacing:0px;white-space:nowrap;transform:scaleX(0.912);transform-origin:0 0;">RAILWAY COLONY</div>
<div style="position:absolute;left:1116.60px;top:568.14px;font-size:15.78px;line-height:15.78px;color:#333;font-weight:normal;letter-spacing:0px;white-space:nowrap;transform:scaleX(0.910);transform-origin:0 0;">BUS FEE</div>
<svg style="position:absolute;left:325px;top:598px" width="17" height="17"><rect x="1.3" y="1.6" width="14.2" height="13.9" rx="3" fill="#fff" stroke="#6f6f6f" stroke-width="1.25"/></svg>
<div style="position:absolute;left:361.30px;top:599.14px;font-size:15.78px;line-height:15.78px;color:#333;font-weight:normal;letter-spacing:0px;white-space:nowrap;transform:scaleX(0.871);transform-origin:0 0;">SEC 4</div>
<div style="position:absolute;left:1116.60px;top:599.14px;font-size:15.78px;line-height:15.78px;color:#333;font-weight:normal;letter-spacing:0px;white-space:nowrap;transform:scaleX(0.910);transform-origin:0 0;">BUS FEE</div>
<svg style="position:absolute;left:325px;top:629px" width="17" height="17"><rect x="1.3" y="1.6" width="14.2" height="13.9" rx="3" fill="#fff" stroke="#6f6f6f" stroke-width="1.25"/></svg>
<div style="position:absolute;left:361.30px;top:630.14px;font-size:15.78px;line-height:15.78px;color:#333;font-weight:normal;letter-spacing:0px;white-space:nowrap;transform:scaleX(0.893);transform-origin:0 0;">SECTOR 2</div>
<div style="position:absolute;left:1116.60px;top:630.14px;font-size:15.78px;line-height:15.78px;color:#333;font-weight:normal;letter-spacing:0px;white-space:nowrap;transform:scaleX(0.910);transform-origin:0 0;">BUS FEE</div>
<div style="position:absolute;left:1899px;top:0px;width:21px;height:888px;background:#f1f1f1"></div>
<div style="position:absolute;left:1901px;top:20px;width:17px;height:681px;background:#c1c1c1"></div>
<svg style="position:absolute;left:1905px;top:8px" width="9" height="5"><path d="M0 5 L4.5 0 L9 5 Z" fill="#a3a3a3"/></svg>
<svg style="position:absolute;left:1905px;top:877px" width="10" height="6"><path d="M0 0 L5 6 L10 0 Z" fill="#505050"/></svg>
</body></html>
